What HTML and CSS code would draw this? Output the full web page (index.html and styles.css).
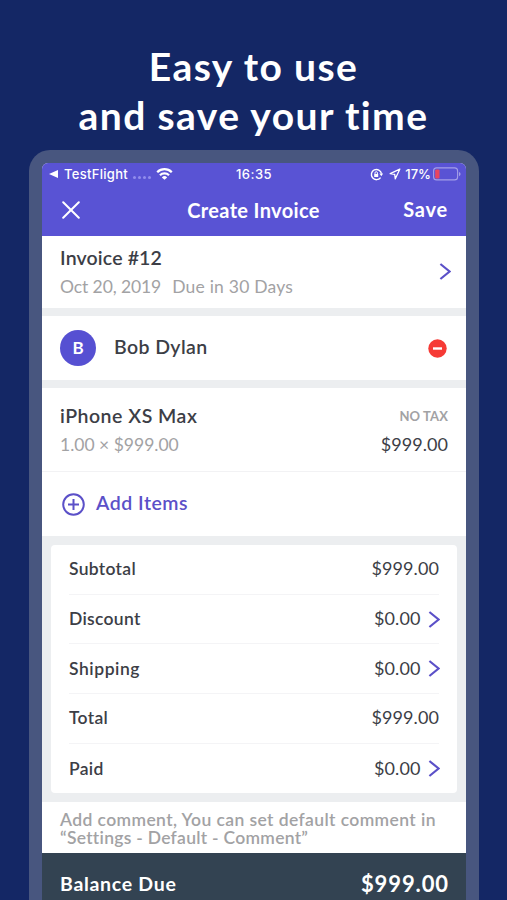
FILE: index.html
```html
<!DOCTYPE html>
<html lang="en">
<head>
<meta charset="utf-8">
<title>Create Invoice</title>
<link rel="stylesheet" href="styles.css">
</head>
<body>
<main class="promo">
  <h1 class="headline">Easy to use<br>and save your time</h1>
  <div class="device">
    <div class="screen">
      <header class="topbar">
        <div class="status">
          <div class="status-left">
            <svg width="10" height="10" viewBox="0 0 10 10"><path d="M9 1v8L0 5z" fill="#fff"/></svg>
            <span class="carrier">TestFlight</span>
            <span class="dots"><i></i><i></i><i></i><i></i></span>
            <svg width="17" height="14" viewBox="0 0 18 14" fill="none" stroke="#fff" stroke-width="2.4"><path d="M1.3 5.1a11 11 0 0 1 15.4 0M4.2 8.3a7 7 0 0 1 9.6 0"/><path d="M9 13.2 6.2 10.6a4 4 0 0 1 5.6 0z" fill="#fff" stroke="none"/></svg>
          </div>
          <span class="clock">16:35</span>
          <div class="status-right">
            <svg width="13" height="13" viewBox="0 0 13 13" fill="none" stroke="#fff" stroke-width="1.4"><path d="M10.6 9.6a5.1 5.1 0 1 1 .9-4"/><path d="M9.4 5.4h3.8l-1.9 2.8z" fill="#fff" stroke="none"/><path d="M4.2 6h4v3h-4z" fill="#fff" stroke="none"/><path d="M5 6V4.9a1.2 1.2 0 0 1 2.4 0V6" stroke-width="1"/></svg>
            <svg class="locate" width="12" height="12" viewBox="0 0 12 12" fill="none" stroke="#fff" stroke-width="1.3" stroke-linejoin="round"><path d="M10.8 1.2 1.2 5.7l4.5.6.6 4.5z"/></svg>
            <span class="percent">17%</span>
            <svg class="battery" width="28" height="14" viewBox="0 0 28 14"><rect x=".6" y=".9" width="24" height="12" rx="3" fill="none" stroke="#a49fe8" stroke-width="1.1"/><path d="M26 5v4.2q1.6-.6 1.6-2.1T26 5z" fill="#a49fe8"/><rect x="2.2" y="2.4" width="4.3" height="9" rx="1.2" fill="#e8455f"/></svg>
          </div>
        </div>
        <nav class="nav">
          <svg width="18" height="18" viewBox="0 0 18 18" stroke="#fff" stroke-width="2" stroke-linecap="round"><path d="m1.2 1.2 15.6 15.6M16.8 1.2 1.2 16.8"/></svg>
          <span class="nav-title">Create Invoice</span>
          <span class="save">Save</span>
        </nav>
      </header>

      <section class="invoice">
        <div class="invoice-text">
          <div class="name">Invoice #12</div>
          <div class="meta"><span class="date">Oct 20, 2019</span><span class="due">Due in 30 Days</span></div>
        </div>
        <svg class="chevron" width="12" height="17" viewBox="0 0 12 17"><path d="m1.4 1 9.2 7.5L1.4 16"/></svg>
      </section>

      <section class="client">
        <span class="avatar">B</span>
        <span class="client-name">Bob Dylan</span>
        <svg width="19" height="19" viewBox="0 0 19 19"><circle cx="9.5" cy="9.5" r="9.2" fill="#f63a35"/><path d="M5 9.5h9" stroke="#fff" stroke-width="2.4"/></svg>
      </section>

      <section class="item">
        <div>
          <div class="name item-name">iPhone XS Max</div>
          <div class="meta">1.00 × $999.00</div>
        </div>
        <div class="item-right">
          <div class="tax">NO TAX</div>
          <div class="price">$999.00</div>
        </div>
      </section>
      <section class="add">
        <svg width="23" height="23" viewBox="0 0 23 23" fill="none" stroke="#5b50c8" stroke-width="2"><circle cx="11.5" cy="11.5" r="10.3"/><path d="M11.5 6v11M6 11.5h11"/></svg>
        <span class="add-label">Add Items</span>
      </section>

      <section class="totals">
        <div class="card">
          <div class="row"><span class="label">Subtotal</span><span class="amount">$999.00</span></div>
          <div class="row"><span class="label">Discount</span><span class="amount">$0.00</span><svg class="chevron" width="12" height="17" viewBox="0 0 12 17"><path d="m1.4 1 9.2 7.5L1.4 16"/></svg></div>
          <div class="row"><span class="label shipping">Shipping</span><span class="amount">$0.00</span><svg class="chevron" width="12" height="17" viewBox="0 0 12 17"><path d="m1.4 1 9.2 7.5L1.4 16"/></svg></div>
          <div class="row"><span class="label">Total</span><span class="amount">$999.00</span></div>
          <div class="row"><span class="label">Paid</span><span class="amount">$0.00</span><svg class="chevron" width="12" height="17" viewBox="0 0 12 17"><path d="m1.4 1 9.2 7.5L1.4 16"/></svg></div>
        </div>
      </section>

      <section class="comment">Add comment, You can set default comment in<br><span class="comment-path">“Settings - Default - Comment”</span></section>
      <footer class="balance"><span class="balance-label">Balance Due</span><span class="balance-amount">$999.00</span></footer>
    </div>
  </div>
</main>
</body>
</html>
```
FILE: styles.css
```css
* { box-sizing: border-box; }
body {
  margin: 0;
  background: #142765;
  font-family: Lato, "Open Sans", sans-serif;
  font-variant-ligatures: none;
  color: #3c3e46;
}
svg { display: block; flex: none; }
.promo { width: 507px; height: 900px; overflow: hidden; padding-top: 42px; }
.headline {
  margin: 0;
  height: 108px;
  text-align: center;
  color: #fff;
  font-size: 39px;
  line-height: 49px;
  font-weight: 700;
  letter-spacing: 1.4px;
}
.device {
  width: 450px;
  height: 800px;
  margin-left: 29px;
  padding: 13px;
  border-radius: 21px;
  background: #48567f;
}
.screen { width: 424px; height: 787px; border-radius: 6px; overflow: hidden; background: #eceef0; }
.topbar { height: 73px; background: #5953d4; color: #fff; }
.status {
  display: grid;
  grid-template-columns: 1fr auto 1fr;
  align-items: center;
  height: 22px;
  padding: 0 5px 0 7px;
  font-family: Inter, sans-serif;
  font-size: 13px;
  font-weight: 500;
}
.status-left, .status-right { display: flex; align-items: center; }
.status-right { justify-content: flex-end; }
.carrier { margin-left: 5px; letter-spacing: .3px; }
.clock { letter-spacing: .5px; margin-right: 2px; }
.dots { display: flex; gap: 2px; margin: 6px 5px 0 5px; }
.dots i { width: 3px; height: 3px; border-radius: 50%; background: #918cec; }
.locate { margin: 0 4px 0 6px; }
.battery { margin-left: 2px; }
.nav { display: grid; grid-template-columns: 1fr auto 1fr; align-items: center; height: 49px; padding: 0 18px 0 20px; font-size: 20px; font-weight: 700; }
.nav-title { letter-spacing: .35px; margin: 0 3px 0 0; }
.save { justify-self: end; letter-spacing: .8px; margin-top: -2px; }
.invoice { display: flex; align-items: center; justify-content: space-between; height: 72px; padding: 0 15px 2px 18px; background: #fff; }
.invoice-text { padding-top: 4px; }
.name { font-size: 19.5px; line-height: 26px; font-weight: 600; letter-spacing: .15px; }
.item-name { letter-spacing: .5px; }
.meta { font-size: 17.5px; line-height: 31px; color: #a2a2a4; }
.date { letter-spacing: -.1px; }
.due { margin-left: 11px; letter-spacing: .22px; }
.chevron { fill: none; stroke: #5b50c8; stroke-width: 2.2; }
.client { display: flex; align-items: center; height: 64px; margin: 8px 0; padding: 0 19px 0 18px; background: #fff; }
.avatar { display: flex; align-items: center; justify-content: center; width: 36px; height: 36px; padding-bottom: 1px; border-radius: 50%; background: #5650d2; color: #fff; font-size: 17px; font-weight: 700; }
.client-name { flex: 1; margin: -3px 0 0 18px; font-size: 19.5px; font-weight: 600; letter-spacing: .4px; }
.item { display: flex; justify-content: space-between; height: 84px; padding: 15px 18px 0; background: #fff; border-bottom: 1px solid #f2f2f4; }
.item-right { text-align: right; }
.tax { font-size: 13px; line-height: 27px; font-weight: 700; letter-spacing: .1px; color: #a2a2a4; }
.price { font-size: 18px; line-height: 28px; letter-spacing: .05px; }
.add { display: flex; align-items: center; height: 64px; padding-left: 20px; background: #fff; color: #5b50c8; }
.add-label { margin: -3px 0 0 11px; font-size: 19.5px; font-weight: 600; letter-spacing: .5px; }
.totals { padding: 9px; }
.card { padding: 0 18px; border-radius: 4px; background: #fff; }
.row { display: flex; align-items: center; height: 49.7px; padding-bottom: 1px; border-bottom: 1px solid #f4f4f6; font-size: 17.5px; }
.row:last-child { border-bottom: 0; }
.label { flex: 1; font-weight: 600; letter-spacing: .3px; }
.shipping { letter-spacing: .55px; }
.amount { margin-top: -1px; font-size: 18px; letter-spacing: .1px; }
.row .chevron { margin: 1px -1px 0 7.5px; }
.comment { height: 51px; padding: 9px 18px 0; background: #fff; color: #a2a2a4; font-size: 17.5px; line-height: 18px; font-weight: 600; letter-spacing: .4px; white-space: nowrap; }
.comment-path { letter-spacing: .28px; }
.balance { display: flex; align-items: center; justify-content: space-between; height: 61px; padding: 0 18px; background: #334352; color: #fff; font-size: 19.5px; font-weight: 700; }
.balance-label { letter-spacing: .7px; }
.balance-amount { font-size: 22px; letter-spacing: .9px; margin-right: -1px; }
```
